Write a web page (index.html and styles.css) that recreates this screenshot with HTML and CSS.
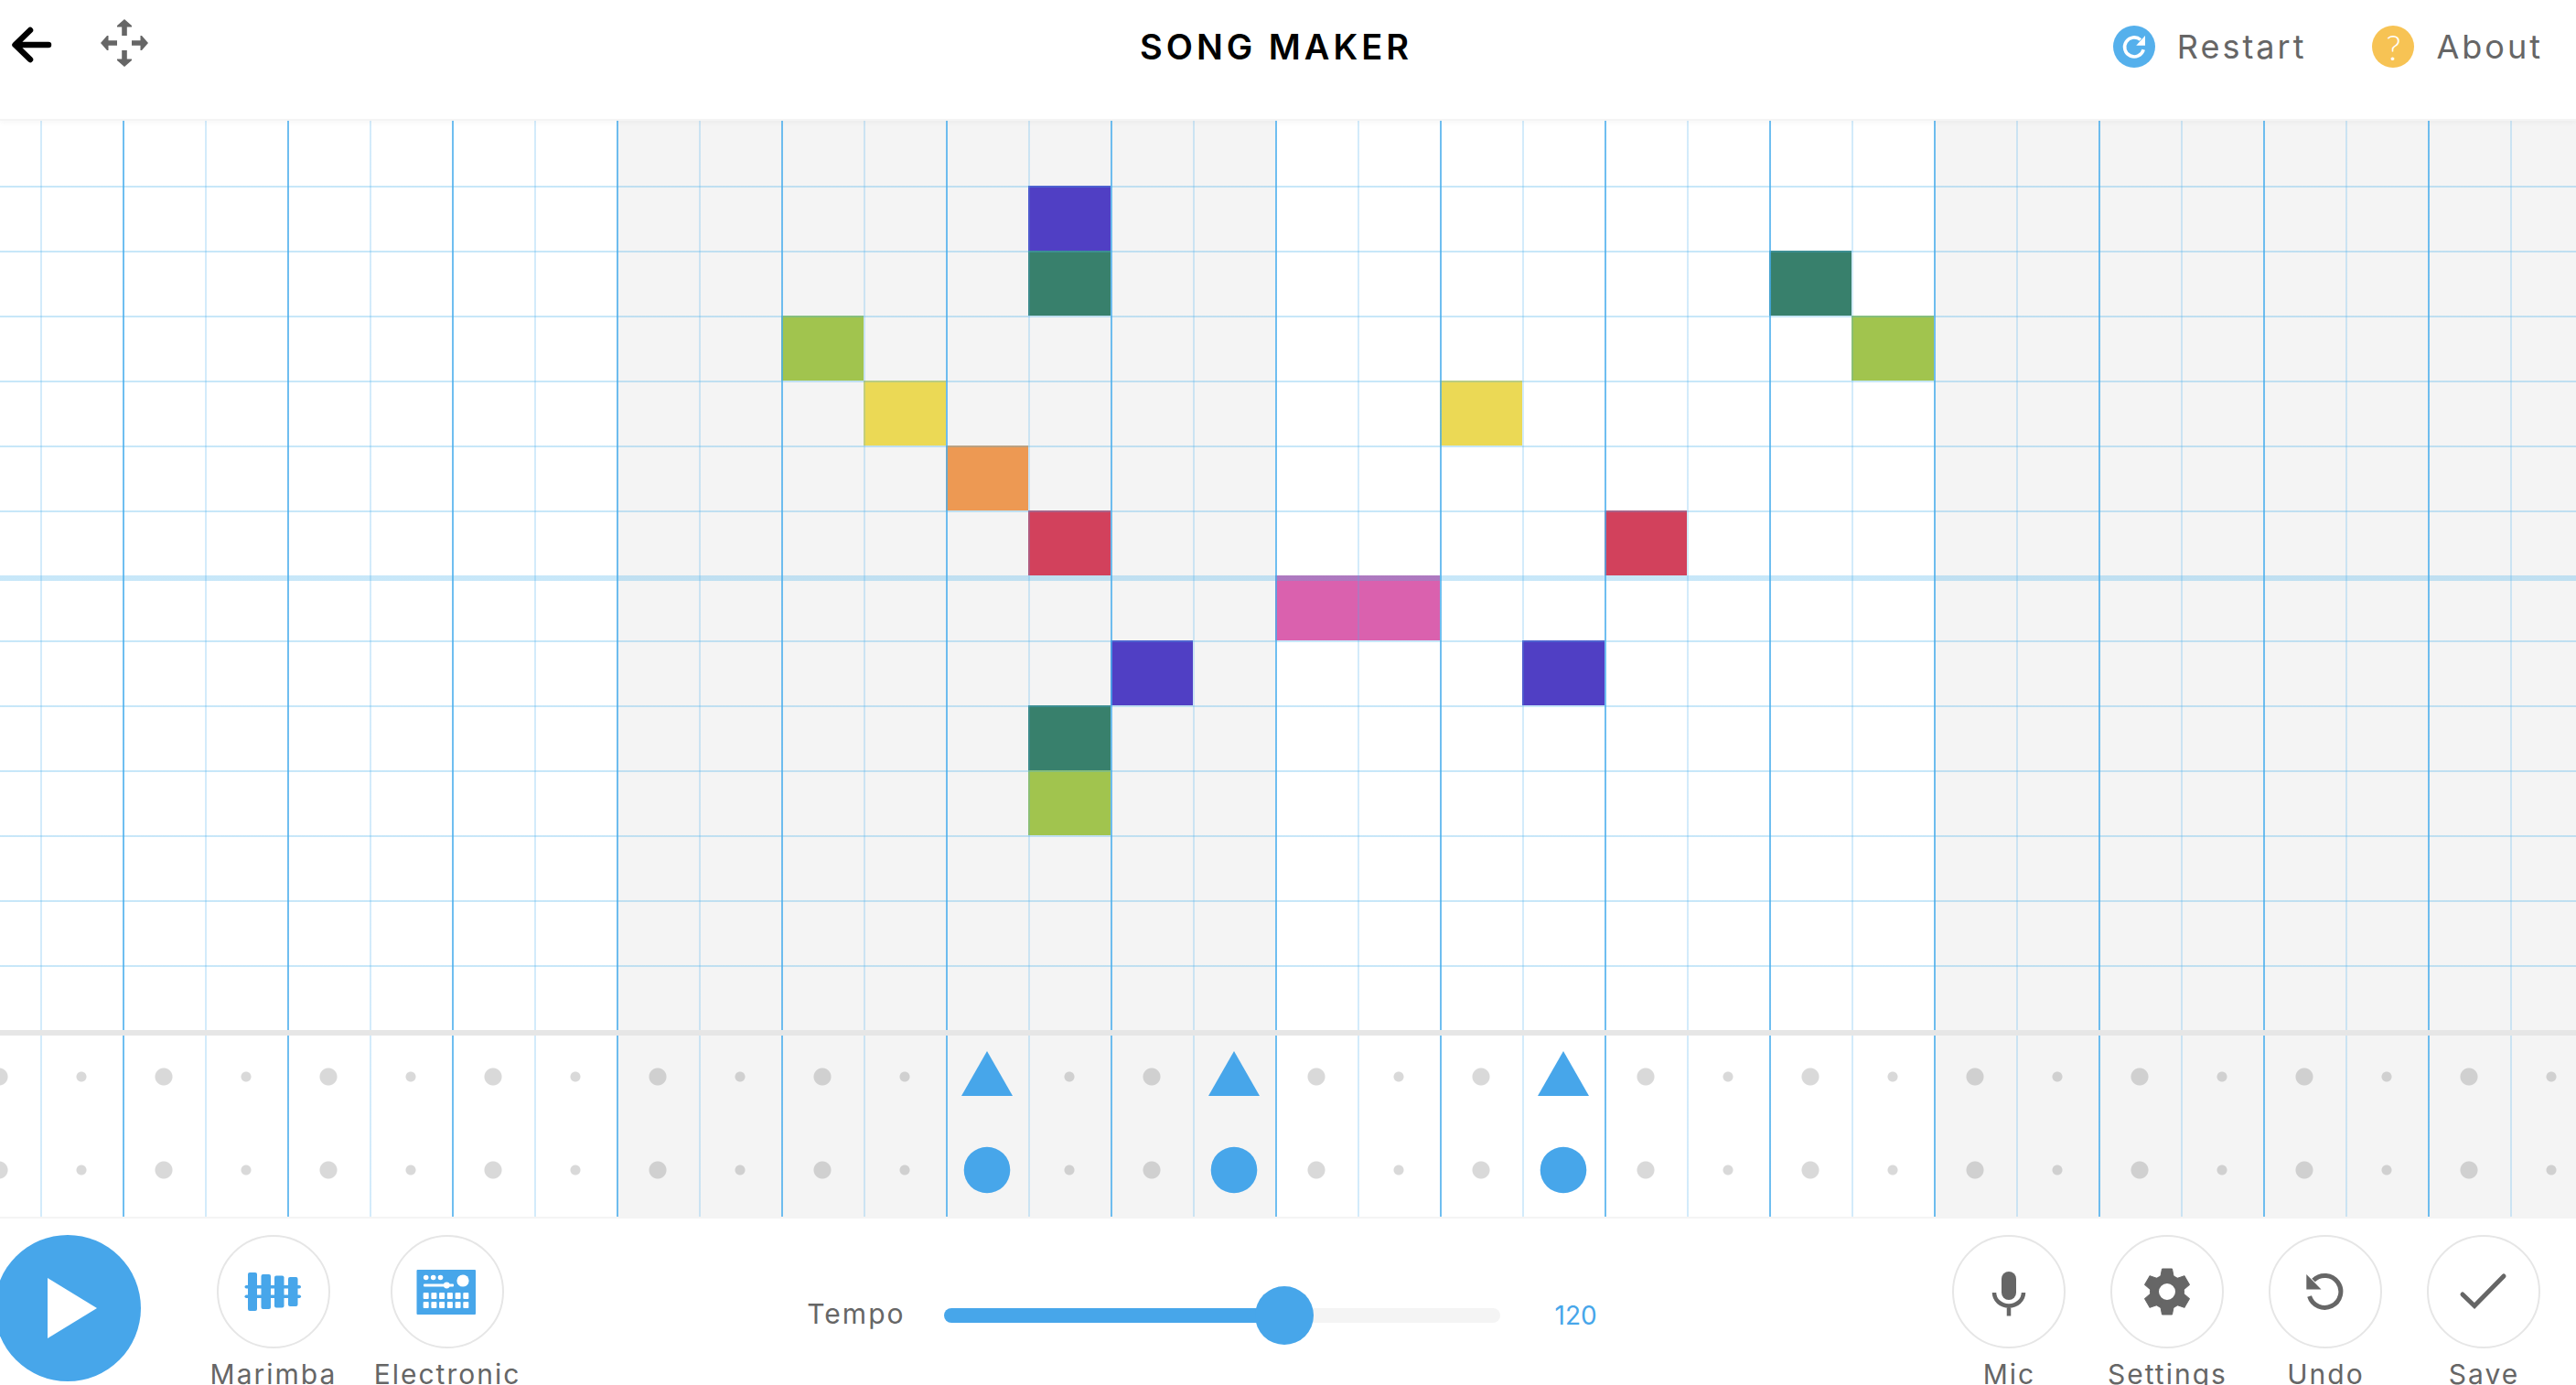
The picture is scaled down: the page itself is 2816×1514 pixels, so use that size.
FILE: index.html
```html
<!DOCTYPE html>
<html lang="en">
<head>
<meta charset="utf-8">
<meta name="viewport" content="width=device-width, initial-scale=1">
<title>Song Maker</title>
<link rel="stylesheet" href="styles.css">
</head>
<body>
<header class="topbar">
  <nav class="topbar-group">
    <a class="icon-link" href="#" aria-label="Back">
      <svg width="48" height="52" viewBox="0 0 48 52" fill="none" stroke="#000" stroke-width="6.5" stroke-linecap="round" stroke-linejoin="round"><path d="M23 8 6.500 24 23 40M8 24H43"/></svg>
    </a>
    <button class="icon-link" type="button" aria-label="Move view">
      <svg width="52" height="60" viewBox="0 0 52 60" fill="#666"><path id="arm" d="M26 0 34 7V8.500H28.800V18H23.200V8.500H18V7Z"/><use href="#arm" transform="rotate(90 26 26)"/><use href="#arm" transform="rotate(180 26 26)"/><use href="#arm" transform="rotate(270 26 26)"/></svg>
    </button>
  </nav>
  <h1 class="title">SONG MAKER</h1>
  <nav class="topbar-group topbar-right">
    <button class="menu-item" type="button">
      <span class="badge badge-blue"><svg width="46" height="46" viewBox="0 0 46 46"><path d="M33.200 26.200A10.500 10.500 0 1 1 30 15.500" fill="none" stroke="#fff" stroke-width="3.600"/><path d="M35 11V21.700H25.200Z" fill="#fff"/></svg></span>
      Restart
    </button>
    <button class="menu-item" type="button">
      <span class="badge badge-yellow" aria-hidden="true">?</span>
      About
    </button>
  </nav>
</header>

<main class="board">
  <section class="melody" aria-label="Melody grid">
    <i class="note la c11 r4"></i>
    <i class="note sol c12 r5"></i>
    <i class="note fa c13 r6"></i>
    <i class="note do c14 r2"></i>
    <i class="note si c14 r3"></i>
    <i class="note mi c14 r7"></i>
    <i class="note si c14 r10"></i>
    <i class="note la c14 r11"></i>
    <i class="note do c15 r9"></i>
    <i class="note re c17 r8"></i>
    <i class="note re c18 r8"></i>
    <i class="note sol c19 r5"></i>
    <i class="note do c20 r9"></i>
    <i class="note mi c21 r7"></i>
    <i class="note si c23 r3"></i>
    <i class="note la c24 r4"></i>
  </section>
  <section class="drums" aria-label="Rhythm grid">
    <svg class="hit c13 r1" width="56" height="56" viewBox="0 0 56 56"><path d="M28 0 56 49H0Z"/></svg>
    <svg class="hit c16 r1" width="56" height="56" viewBox="0 0 56 56"><path d="M28 0 56 49H0Z"/></svg>
    <svg class="hit c20 r1" width="56" height="56" viewBox="0 0 56 56"><path d="M28 0 56 49H0Z"/></svg>
    <svg class="hit c13 r2" width="56" height="56" viewBox="0 0 56 56"><circle cx="28" cy="28" r="25.300"/></svg>
    <svg class="hit c16 r2" width="56" height="56" viewBox="0 0 56 56"><circle cx="28" cy="28" r="25.300"/></svg>
    <svg class="hit c20 r2" width="56" height="56" viewBox="0 0 56 56"><circle cx="28" cy="28" r="25.300"/></svg>
  </section>
</main>

<footer class="controls">
  <div class="instruments">
    <button class="play" type="button" aria-label="Play">
      <svg width="160" height="160" viewBox="0 0 160 160"><path d="M58 47 112 80 58 113Z" fill="#fff"/></svg>
    </button>
    <button class="tool" type="button">
      <span class="ring"><svg width="120" height="120" viewBox="0 0 120 120" fill="#47a6ea"><rect x="32" y="39" width="10" height="42" rx="2"/><rect x="46.500" y="41" width="10.500" height="38" rx="2"/><rect x="61" y="42.500" width="10.500" height="35" rx="2"/><rect x="76" y="44" width="10.500" height="32" rx="2"/><rect x="28.500" y="53" width="61.500" height="3.500" rx="1.700"/><rect x="28.500" y="63.500" width="61.500" height="3.500" rx="1.700"/></svg></span>
      Marimba
    </button>
    <button class="tool" type="button">
      <span class="ring"><svg width="120" height="120" viewBox="0 0 120 120" fill="#fff"><rect x="26.500" y="36" width="64.500" height="49" rx="1" fill="#47a6ea"/><circle cx="36.700" cy="44.500" r="2.800"/><circle cx="44.700" cy="44.500" r="2.800"/><circle cx="52.500" cy="44.500" r="2.800"/><rect x="34" y="51.500" width="33" height="3" rx="1"/><circle cx="59.300" cy="53" r="3.400"/><circle cx="77" cy="48" r="6.600"/><g id="keys"><rect x="33.700" y="61" width="6" height="7" rx="1"/><rect x="42.400" y="61" width="6" height="7" rx="1"/><rect x="51.100" y="61" width="6" height="7" rx="1"/><rect x="59.900" y="61" width="6" height="7" rx="1"/><rect x="68.600" y="61" width="6" height="7" rx="1"/><rect x="77.300" y="61" width="6" height="7" rx="1"/></g><use href="#keys" y="10"/></svg></span>
      Electronic
    </button>
  </div>
  <div class="tempo">
    <label class="tempo-label" for="tempo">Tempo</label>
    <input id="tempo" class="slider" type="range" min="20" max="180" value="120">
    <output class="bpm" for="tempo">120</output>
  </div>
  <div class="actions">
    <button class="tool" type="button">
      <span class="ring"><svg width="120" height="120" viewBox="0 0 120 120"><rect x="52" y="38" width="16" height="31" rx="8" fill="#666"/><path d="M44 61A16 14.500 0 0 0 76 61M60 75V86.500" fill="none" stroke="#666" stroke-width="4.500"/></svg></span>
      Mic
    </button>
    <button class="tool" type="button">
      <span class="ring"><svg width="120" height="120" viewBox="0 0 120 120" fill="#666"><circle cx="60" cy="60" r="14" fill="none" stroke="#666" stroke-width="10"/><g id="teeth"><path id="tooth" d="M54.500 35H65.500L68 48 60 50 52 48Z" stroke="#666" stroke-linejoin="round"/><use href="#tooth" transform="rotate(60 60 60)"/><use href="#tooth" transform="rotate(120 60 60)"/></g><use href="#teeth" transform="rotate(180 60 60)"/></svg></span>
      Settings
    </button>
    <button class="tool" type="button">
      <span class="ring"><svg width="120" height="120" viewBox="0 0 120 120"><path d="M42.600 65A17.500 17.500 0 1 0 47 47.500" fill="none" stroke="#666" stroke-width="5"/><path d="M39.300 41V57.500H55.500Z" fill="#666"/></svg></span>
      Undo
    </button>
    <button class="tool" type="button">
      <span class="ring"><svg width="120" height="120" viewBox="0 0 120 120"><path d="M37 63 50 75.500 82 43" fill="none" stroke="#666" stroke-width="5" stroke-linecap="round"/></svg></span>
      Save
    </button>
  </div>
</footer>
</body>
</html>
```
FILE: styles.css
```css
:root {
  --blue: #47a6ea;
  --grey: #666;
  --shade: #f4f4f4;
  --line-strong: rgba(71, 172, 236, 0.78);
  --line-soft: rgba(71, 172, 236, 0.24);
  --line-row: rgba(71, 176, 234, 0.3);
}

* {
  box-sizing: border-box;
}

body {
  margin: 0;
  height: 100vh;
  display: flex;
  flex-direction: column;
  overflow: hidden;
  background: #fff;
  color: var(--grey);
  font-family: Inter, "Open Sans", sans-serif;
  font-size: 30px;
  letter-spacing: 2px;
}

button {
  margin: 0;
  padding: 0;
  border: 0;
  background: none;
  color: inherit;
  font: inherit;
  letter-spacing: inherit;
  cursor: pointer;
}

svg {
  display: block;
}

/* Top bar */
.topbar {
  flex: none;
  height: 132px;
  display: grid;
  grid-template-columns: 1fr auto 1fr;
  align-items: center;
  padding: 0 36px 28px 10px;
  border-bottom: 2px solid var(--shade);
  box-shadow: 0 2px 6px rgba(0, 0, 0, 0.04);
  z-index: 1;
}

.topbar-group {
  display: flex;
  align-items: center;
  gap: 52px;
}

.topbar-right {
  justify-content: flex-end;
  gap: 72px;
}

.title {
  margin: 0;
  color: #000;
  font-size: 38px;
  font-weight: 600;
  letter-spacing: 4px;
}

.menu-item {
  display: flex;
  align-items: center;
  gap: 24px;
  font-size: 36px;
  letter-spacing: 3px;
}

.badge {
  width: 46px;
  height: 46px;
  border-radius: 50%;
  color: #fff;
  font-family: Lato, sans-serif;
  font-size: 38px;
  font-weight: 300;
  line-height: 46px;
  letter-spacing: 0;
  text-align: center;
}

.badge-blue {
  background: #55b0ec;
}

.badge-yellow {
  background: #f7c354;
}

/* Board: 32 steps, slightly wider than the window */
.board {
  flex: 1;
  min-height: 0;
  margin: 0 -18px 0 -46px;
  display: flex;
  flex-direction: column;
  background: linear-gradient(to right, #fff 50%, var(--shade) 50%) 0 0 / 50% 100%;
}

.melody,
.drums {
  display: grid;
  grid-template-columns: repeat(32, minmax(0, 1fr));
}

.melody {
  flex: 1;
  grid-template-rows: repeat(14, minmax(0, 1fr));
}

.drums {
  flex: none;
  height: 204px;
  grid-template-rows: 1fr 1fr;
  background:
    radial-gradient(circle at 25% 50%, rgba(0, 0, 0, 0.15) 9px, transparent 10px) 0 0 / 6.25% 50%,
    radial-gradient(circle at 75% 50%, rgba(0, 0, 0, 0.15) 5px, transparent 6px) 0 0 / 6.25% 50%;
}

/* Beat lines */
.melody::before,
.drums::before {
  content: "";
  grid-area: 1 / 1 / -1 / -1;
  z-index: 1;
  pointer-events: none;
  background: linear-gradient(to right, var(--line-strong) 2px, transparent 2px, transparent 50%, var(--line-soft) 50%, var(--line-soft) calc(50% + 2px), transparent calc(50% + 2px)) 0 0 / 6.25% 100%;
}

/* Pitch lines, with a thicker one at the octave */
.melody::after {
  content: "";
  grid-area: 2 / 1 / -1 / -1;
  z-index: 1;
  pointer-events: none;
  background:
    linear-gradient(var(--line-row) 2px, transparent 2px) 0 0 / 100% calc(100% / 13),
    linear-gradient(transparent calc(600% / 13 + 2px), var(--line-row) calc(600% / 13 + 2px), var(--line-row) calc(600% / 13 + 6px), transparent calc(600% / 13 + 6px));
}

.drums::after {
  content: "";
  grid-area: 1 / 1 / 2 / -1;
  align-self: start;
  height: 6px;
  z-index: 2;
  background: #e6e6e6;
}

.do { background: #503fc4; }
.re { background: #da61ae; }
.mi { background: #d2415c; }
.fa { background: #ed9953; }
.sol { background: #ebd955; }
.la { background: #a1c44e; }
.si { background: #38806c; }

.hit {
  place-self: center;
  fill: var(--blue);
}

.r1 { grid-row: 1; }
.r2 { grid-row: 2; }
.r3 { grid-row: 3; }
.r4 { grid-row: 4; }
.r5 { grid-row: 5; }
.r6 { grid-row: 6; }
.r7 { grid-row: 7; }
.r8 { grid-row: 8; }
.r9 { grid-row: 9; }
.r10 { grid-row: 10; }
.r11 { grid-row: 11; }

.c11 { grid-column: 11; }
.c12 { grid-column: 12; }
.c13 { grid-column: 13; }
.c14 { grid-column: 14; }
.c15 { grid-column: 15; }
.c16 { grid-column: 16; }
.c17 { grid-column: 17; }
.c18 { grid-column: 18; }
.c19 { grid-column: 19; }
.c20 { grid-column: 20; }
.c21 { grid-column: 21; }
.c23 { grid-column: 23; }
.c24 { grid-column: 24; }

/* Bottom controls */
.controls {
  flex: none;
  height: 184px;
  display: flex;
  justify-content: space-between;
  align-items: flex-start;
  padding: 18px 14px 0 0;
  border-top: 2px solid var(--shade);
  overflow: hidden;
}

.instruments,
.actions {
  display: flex;
}

.instruments {
  margin-left: -6px;
}

.play {
  width: 160px;
  height: 160px;
  margin-right: 50px;
  border-radius: 50%;
  background: var(--blue);
}

.tool {
  width: 173px;
  display: flex;
  flex-direction: column;
  align-items: center;
  gap: 10px;
  line-height: 36px;
}

.instruments .tool {
  width: 190px;
}

.ring {
  width: 124px;
  height: 124px;
  border: 2px solid #e6e6e6;
  border-radius: 50%;
}

.tempo {
  display: flex;
  align-items: center;
  height: 176px;
  padding-right: 66px;
}

.tempo-label {
  padding-bottom: 4px;
}

.slider {
  appearance: none;
  width: 608px;
  height: 64px;
  margin: 0 60px 0 42px;
  background: transparent;
}

.slider::-webkit-slider-runnable-track {
  height: 16px;
  border-radius: 8px;
  background: linear-gradient(to right, var(--blue) 62%, var(--shade) 62%);
}

.slider::-webkit-slider-thumb {
  appearance: none;
  width: 64px;
  height: 64px;
  margin-top: -24px;
  border-radius: 50%;
  background: var(--blue);
}

.bpm {
  color: var(--blue);
  font-size: 28px;
  letter-spacing: 0;
}
```
